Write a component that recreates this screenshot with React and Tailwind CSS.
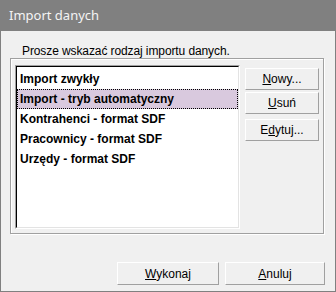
const items = [
  "Import zwykły",
  "Import - tryb automatyczny",
  "Kontrahenci - format SDF",
  "Pracownicy - format SDF",
  "Urzędy - format SDF",
];

function Btn({ children, className = "" }) {
  return (
    <button
      className={`flex items-center justify-center bg-[#f0f0f0] border border-t-white border-l-white border-b-[#a0a0a0] border-r-[#a0a0a0] text-[12px] text-black ${className}`}
    >
      {children}
    </button>
  );
}

export default function App() {
  const font = { fontFamily: '"Liberation Sans", Arial, sans-serif' };
  return (
    <div
      className="w-[336px] h-[292px] flex flex-col bg-[#f0f0f0] border-x border-b border-[#808080]"
      style={font}
    >
      {/* title bar */}
      <div className="h-[31px] -mx-px bg-[#808080] flex items-center pl-[9px] text-[13px] text-[#f4f4f4] font-['Noto_Sans',sans-serif]">
        Import danych
      </div>

      <div className="pl-[21px] pt-[13px] text-[12px] leading-[14px] tracking-[-0.1px] text-black">
        Prosze wskazać rodzaj importu danych.
      </div>

      {/* etched frame */}
      <div className="ml-[9px] w-[314px] h-[176px] border border-[#a0a0a0] shadow-[inset_1px_1px_0_#fff,1px_1px_0_#fff] flex pt-[6px] pl-[4px]">
        {/* list box */}
        <div className="w-[225px] h-[164px] border border-t-[#a0a0a0] border-l-[#a0a0a0] border-b-white border-r-white">
          <div className="h-full border border-t-black border-l-black border-b-[#e3e3e3] border-r-[#e3e3e3] bg-white pt-[2px]">
            {items.map((t, i) => (
              <div
                key={t}
                className={`h-[20px] flex items-center pl-[2px] text-[12px] font-bold text-black ${
                  i === 1
                    ? "bg-[#d9c9de] border border-dotted border-black"
                    : "border border-transparent"
                }`}
              >
                {t}
              </div>
            ))}
          </div>
        </div>

        {/* side buttons */}
        <div className="flex flex-col ml-[5px] pt-[3px]">
          <Btn className="w-[74px] h-[22px]">
            <span><span className="underline">N</span>owy...</span>
          </Btn>
          <Btn className="w-[74px] h-[22px] mt-[2px]">
            <span><span className="underline">U</span>suń</span>
          </Btn>
          <Btn className="w-[74px] h-[22px] mt-[5px]">
            <span>E<span className="underline">d</span>ytuj...</span>
          </Btn>
        </div>
      </div>

      {/* bottom buttons */}
      <div className="flex justify-end gap-[6px] mt-[28px] pr-[10px]">
        <Btn className="w-[102px] h-[23px]">
          <span><span className="underline">W</span>ykonaj</span>
        </Btn>
        <Btn className="w-[100px] h-[23px]">
          <span><span className="underline">A</span>nuluj</span>
        </Btn>
      </div>
    </div>
  );
}
